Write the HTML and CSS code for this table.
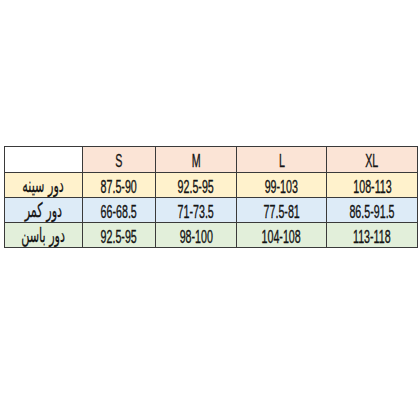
FILE: index.html
```html
<!DOCTYPE html>
<html lang="fa">
<head>
<meta charset="utf-8">
<link rel="stylesheet" href="styles.css">
</head>
<body>
<table class="chart">
  <colgroup>
    <col class="c0"><col class="c1"><col class="c2"><col class="c3"><col class="c4">
  </colgroup>
  <tr class="head">
    <td class="blank"></td>
    <td><span>S</span></td>
    <td><span>M</span></td>
    <td><span>L</span></td>
    <td><span>XL</span></td>
  </tr>
  <tr class="r1">
    <td class="label"><span>دور سینه</span></td>
    <td><span>87.5-90</span></td>
    <td><span>92.5-95</span></td>
    <td><span>99-103</span></td>
    <td><span>108-113</span></td>
  </tr>
  <tr class="r2">
    <td class="label"><span>دور کمر</span></td>
    <td><span>66-68.5</span></td>
    <td><span>71-73.5</span></td>
    <td><span>77.5-81</span></td>
    <td><span>86.5-91.5</span></td>
  </tr>
  <tr class="r3">
    <td class="label"><span>دور باسن</span></td>
    <td><span>92.5-95</span></td>
    <td><span>98-100</span></td>
    <td><span>104-108</span></td>
    <td><span>113-118</span></td>
  </tr>
</table>
</body>
</html>
```
FILE: styles.css
```css
html, body {
  margin: 0;
  padding: 0;
  background: #ffffff;
}
body {
  padding: 146px 0 0 4px;
  font-family: "Liberation Sans", "DejaVu Sans", sans-serif;
}
.chart {
  border-collapse: collapse;
  table-layout: fixed;
  width: 413px;
}
.c0 { width: 78px; }
.c1 { width: 73px; }
.c2 { width: 81px; }
.c3 { width: 90px; }
.c4 { width: 91px; }
.chart td {
  border: 1.5px solid #3a3a3a;
  text-align: center;
  vertical-align: middle;
  padding: 0;
  font-size: 17.5px;
  line-height: 20px;
  color: #141414;
  height: 24px;
  white-space: nowrap;
}
.chart .head td { height: 25px; }
.chart td span {
  display: inline-block;
  transform: scaleX(0.61);
  -webkit-text-stroke: 0.35px #141414;
  margin: 0 -24px;
  padding-top: 3px;
}
.chart td.label span {
  font-family: "DejaVu Sans", sans-serif;
  font-size: 20px;
  transform: scaleX(0.56);
  -webkit-text-stroke: 0.3px #141414;
  padding-top: 0;
}
.head td { background: #fbe4d6; }
.head td.blank { background: #ffffff; }
.r1 td { background: #fff2cc; }
.r2 td { background: #ddebf7; }
.r3 td { background: #e2efda; }
```
